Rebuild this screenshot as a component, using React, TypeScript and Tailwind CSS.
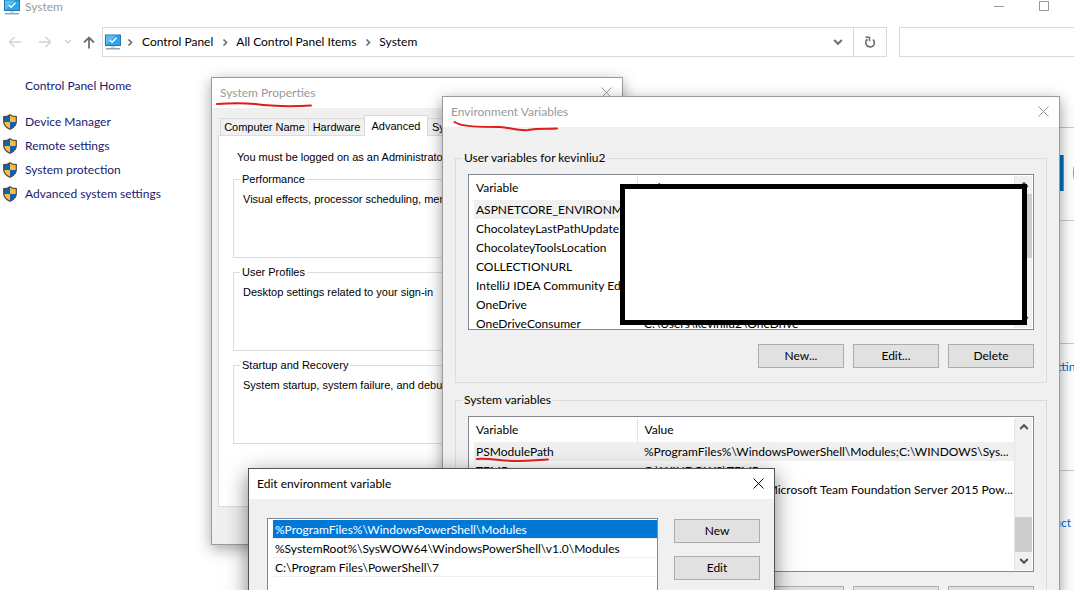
import type { ReactNode } from 'react';

const tasks = ['Device Manager', 'Remote settings', 'System protection', 'Advanced system settings'];

const crumbs = ['Control Panel', 'All Control Panel Items', 'System'];

const groups = [
  { title: 'Performance', body: 'Visual effects, processor scheduling, memory usage' },
  { title: 'User Profiles', body: 'Desktop settings related to your sign-in' },
  { title: 'Startup and Recovery', body: 'System startup, system failure, and debugging' },
];

const userVariables = [
  ['ASPNETCORE_ENVIRONMENT', ''],
  ['ChocolateyLastPathUpdate', ''],
  ['ChocolateyToolsLocation', ''],
  ['COLLECTIONURL', ''],
  ['IntelliJ IDEA Community Edition', ''],
  ['OneDrive', ''],
  ['OneDriveConsumer', 'C:\\Users\\kevinliu2\\OneDrive'],
];

const systemVariables = [
  ['PSModulePath', '%ProgramFiles%\\WindowsPowerShell\\Modules;C:\\WINDOWS\\Sys...'],
  ['TEMP', 'C:\\WINDOWS\\TEMP'],
  ['TFSPowerToolDir', 'C:\\Program Files (x86)\\Microsoft Team Foundation Server 2015 Pow...'],
];

const modulePaths = [
  '%ProgramFiles%\\WindowsPowerShell\\Modules',
  '%SystemRoot%\\SysWOW64\\WindowsPowerShell\\v1.0\\Modules',
  'C:\\Program Files\\PowerShell\\7',
];

function Monitor() {
  return (
    <svg width="16" height="16" viewBox="0 0 16 16" className="shrink-0" aria-hidden="true">
      <rect x="0.5" y="1" width="15" height="10.5" fill="#2fa4ea" stroke="#2277ad" />
      <path d="M1 11V1.500H11Z" fill="#56bdf5" />
      <path d="M4.800 6l2.300 2.300L11.500 3.800" fill="none" stroke="#fff" strokeWidth="1.400" />
      <path d="M6 12.500h4v1H6z" fill="#9db4c4" />
      <path d="M1 14h14v1.500H1z" fill="#8fa5b8" />
    </svg>
  );
}

function Shield() {
  return (
    <svg width="14" height="16" viewBox="0 0 14 16" className="shrink-0" aria-hidden="true">
      <path d="M7 0.600C5 2.200 3 2.700 0.700 2.700V7.500C0.700 11 3.500 13.800 7 15.400Z" fill="#0c62b8" />
      <path d="M7 0.600C9 2.200 11 2.700 13.300 2.700V7.500C13.300 11 10.500 13.800 7 15.400Z" fill="#fbbc3c" />
      <path d="M7 8H13.300C13 11.500 10 14 7 15.400Z" fill="#0c62b8" />
      <path d="M7 8H0.700C1 11.500 4 14 7 15.400Z" fill="#fbbc3c" />
      <path
        d="M7 0.700C5 2.200 3 2.700 0.700 2.700V7.500C0.700 11 3.500 13.800 7 15.300C10.500 13.800 13.300 11 13.300 7.500V2.700C11 2.700 9 2.200 7 0.700Z"
        fill="none"
        stroke="#4b4a45"
        strokeWidth="1.200"
      />
    </svg>
  );
}

function Cross() {
  return (
    <svg width="11" height="11" viewBox="0 0 11 11" aria-hidden="true">
      <path d="M0.500 0.500l10 10M10.500 0.500l-10 10" stroke="currentColor" fill="none" />
    </svg>
  );
}

function Chevron({ className }: { className?: string }) {
  return (
    <svg width="10" height="10" viewBox="0 0 10 10" className={className} aria-hidden="true">
      <path d="M1.200 3L5 6.800 8.800 3" stroke="currentColor" strokeWidth="2" fill="none" />
    </svg>
  );
}

function TitleBar({ title, active }: { title: string; active?: boolean }) {
  return (
    <header
      className={`flex h-[30px] items-center justify-between bg-white pr-2.5 pl-2 ${active ? 'text-black' : 'text-[#999]'}`}
    >
      <h2>{title}</h2>
      <button aria-label={`Close ${title}`} className="flex pb-0.5">
        <Cross />
      </button>
    </header>
  );
}

function PushButton({ children }: { children: ReactNode }) {
  return (
    <button className="h-6 w-[86px] shrink-0 border border-[#adadad] bg-[#e1e1e1] leading-4">{children}</button>
  );
}

function VariableList({ rows, thumb }: { rows: string[][]; thumb: string }) {
  return (
    <div className="mt-[7px] flex h-[156px] overflow-hidden border border-[#828790] bg-white p-px">
      <div className="min-w-0 flex-1 overflow-hidden border-r border-[#e5e5e5] pl-1">
        <table className="w-full table-fixed border-collapse text-left">
          <thead>
            <tr className="h-6">
              <th className="w-[163px] border-r border-[#e5e5e5] pl-0.5 font-normal">Variable</th>
              <th className="pl-[7px] font-normal">Value</th>
            </tr>
          </thead>
          <tbody>
            {rows.map(([name, value], index) => (
              <tr key={name} className={`h-[19px] ${index === 0 ? 'bg-[#f0f0f0]' : ''}`}>
                <td className="overflow-hidden pl-0.5 whitespace-nowrap">{name}</td>
                <td className="overflow-hidden pl-[7px] whitespace-nowrap">{value}</td>
              </tr>
            ))}
          </tbody>
        </table>
      </div>
      <div className="flex w-[17px] flex-col items-center bg-[#f0f0f0] text-[#505050]">
        <Chevron className="my-1 shrink-0 rotate-180" />
        <div className="relative w-full flex-1">
          <div className={`absolute w-full bg-[#cdcdcd] ${thumb}`} />
        </div>
        <Chevron className="my-1 shrink-0" />
      </div>
    </div>
  );
}

function VariableGroup({ title, rows, thumb }: { title: string; rows: string[][]; thumb: string }) {
  return (
    <fieldset className="border border-[#dcdcdc] px-3 pb-3.5">
      <legend className="-ml-1.5 px-0.5">{title}</legend>
      <VariableList rows={rows} thumb={thumb} />
      <div className="mt-3.5 flex justify-end gap-[9px]">
        <PushButton>New...</PushButton>
        <PushButton>Edit...</PushButton>
        <PushButton>Delete</PushButton>
      </div>
    </fieldset>
  );
}

function SystemProperties() {
  return (
    <section className="absolute top-[77px] left-[211px] flex h-[468px] w-[412px] flex-col border border-[#9b9b9b] bg-[#f0f0f0] shadow-[0_4px_14px_rgba(0,0,0,0.35)]">
      <TitleBar title="System Properties" />
      <div className="px-1.5 pt-[7px] font-['Liberation_Sans',Arial,sans-serif] text-[11px] leading-4">
        <div role="tablist" className="flex h-5 items-end pl-0.5">
          <button role="tab" className="h-[17px] w-[88px] border-t border-l border-[#d9d9d9]">
            Computer Name
          </button>
          <button role="tab" className="h-[17px] w-14 border-t border-l border-[#d9d9d9]">
            Hardware
          </button>
          <button
            role="tab"
            aria-selected="true"
            className="z-10 -mb-px h-[21px] w-16 border border-b-0 border-[#d9d9d9] bg-white"
          >
            Advanced
          </button>
          <button role="tab" className="h-[17px] border-t border-r border-[#d9d9d9] px-1">
            System Protection
          </button>
        </div>
        <div className="flex h-[372px] flex-col gap-1.5 border border-[#dcdcdc] bg-white px-3.5 pt-[13px]">
          <p className="pl-1 whitespace-nowrap">You must be logged on as an Administrator to make most of these changes.</p>
          {groups.map((group) => (
            <fieldset key={group.title} className="h-[87px] border border-[#dcdcdc] px-[9px]">
              <legend className="-ml-[3px] px-0.5">{group.title}</legend>
              <p className="mt-1 whitespace-nowrap">{group.body}</p>
            </fieldset>
          ))}
        </div>
      </div>
    </section>
  );
}

function EnvironmentVariables() {
  return (
    <section className="absolute top-[96px] left-[442px] w-[618px] border border-[#9b9b9b] bg-[#f0f0f0] shadow-[0_4px_14px_rgba(0,0,0,0.4)]">
      <TitleBar title="Environment Variables" />
      <div className="flex flex-col gap-2 px-3 pt-[22px] pb-12">
        <VariableGroup title="User variables for kevinliu2" rows={userVariables} thumb="top-0 h-16" />
        <VariableGroup title="System variables" rows={systemVariables} thumb="bottom-0 h-[35px]" />
      </div>
    </section>
  );
}

function EditVariable() {
  return (
    <section className="absolute top-[468px] left-[248px] w-[527px] border border-[#555] bg-[#f0f0f0] shadow-[0_6px_20px_rgba(0,0,0,0.5)]">
      <TitleBar title="Edit environment variable" active />
      <div className="flex gap-4 pt-[19px] pr-3.5 pl-[18px]">
        <ul className="h-80 w-[391px] shrink-0 border border-[#828790] bg-white pt-px pl-[5px] leading-5">
          {modulePaths.map((path, index) => (
            <li
              key={path}
              className={`h-[19px] border-b border-[#f0f0f0] pl-0.5 ${index === 0 ? 'bg-[#0078d7] text-white' : ''}`}
            >
              {path}
            </li>
          ))}
        </ul>
        <div className="flex flex-col gap-[13px] pt-px">
          <PushButton>New</PushButton>
          <PushButton>Edit</PushButton>
        </div>
      </div>
    </section>
  );
}

function AddressBar() {
  return (
    <div className="mt-3.5 flex h-[30px] text-black">
      <nav className="flex w-[102px] shrink-0 items-center text-[#d2d2d2]">
        <button aria-label="Back" className="ml-2">
          <svg width="14" height="12" viewBox="0 0 14 12">
            <path d="M13 6H1.500M6.500 1l-5 5 5 5" stroke="currentColor" strokeWidth="1.400" fill="none" />
          </svg>
        </button>
        <button aria-label="Forward" className="ml-4">
          <svg width="14" height="12" viewBox="0 0 14 12">
            <path d="M1 6h11.500M7.500 1l5 5-5 5" stroke="currentColor" strokeWidth="1.400" fill="none" />
          </svg>
        </button>
        <button aria-label="Recent locations" className="ml-3">
          <svg width="8" height="6" viewBox="0 0 8 6">
            <path d="M1 1l3 3 3-3" stroke="currentColor" strokeWidth="1.500" fill="none" />
          </svg>
        </button>
        <button aria-label="Up" className="ml-[11px] text-[#707070]">
          <svg width="12" height="13" viewBox="0 0 12 13">
            <path d="M6 12.500V1.500M1 6.500l5-5 5 5" stroke="currentColor" strokeWidth="1.800" fill="none" />
          </svg>
        </button>
      </nav>
      <div className="flex min-w-0 flex-1 items-center border border-[#d9d9d9] pl-0.5">
        <Monitor />
        {crumbs.map((crumb, index) => (
          <div key={crumb} className="flex items-center">
            <svg
              width="9"
              height="9"
              viewBox="0 0 9 9"
              className={`text-[#6a6a6a] ${index === 0 ? 'mr-2 ml-1' : 'mx-[7px]'}`}
              aria-hidden="true"
            >
              <path d="M3.500 1.500l3 3-3 3" stroke="currentColor" strokeWidth="1.600" fill="none" />
            </svg>
            <a href="#" className="whitespace-nowrap">
              {crumb}
            </a>
          </div>
        ))}
        <button aria-label="Previous locations" className="mr-2.5 ml-auto text-[#707070]">
          <Chevron />
        </button>
        <button
          aria-label="Refresh"
          className="flex h-full w-[33px] items-center justify-center border-l border-[#d9d9d9] text-[#707070]"
        >
          <svg width="12" height="12" viewBox="0 0 12 12">
            <path d="M9 3.500A4.300 4.300 0 1 1 3.500 3.200" stroke="currentColor" strokeWidth="1.700" fill="none" />
            <path d="M1.500 1.200H5.500V5.200" stroke="currentColor" strokeWidth="1.500" fill="none" />
          </svg>
        </button>
      </div>
      <input
        aria-label="Search Control Panel"
        className="ml-3 w-[175px] shrink-0 border border-r-0 border-[#d9d9d9] px-2 outline-none"
      />
    </div>
  );
}

function SystemWindow() {
  return (
    <section className="flex h-full flex-col">
      <header className="flex h-[13px] items-center gap-[5px] pl-1 text-[#999]">
        <Monitor />
        <h1>System</h1>
        <button aria-label="Minimize" className="mr-[29px] ml-auto flex">
          <svg width="11" height="11" viewBox="0 0 11 11">
            <path d="M0 5.500h10" stroke="currentColor" />
          </svg>
        </button>
        <button aria-label="Maximize" className="mr-6 flex">
          <svg width="11" height="11" viewBox="0 0 11 11">
            <path d="M0.500 0.500h9v9h-9z" stroke="currentColor" fill="none" />
          </svg>
        </button>
      </header>
      <AddressBar />
      <div className="flex flex-1">
        <aside className="w-[211px] shrink-0 pt-5 text-[#191970]">
          <a href="#" className="ml-[25px]">
            Control Panel Home
          </a>
          <ul className="mt-[15px]">
            {tasks.map((task) => (
              <li key={task} className="flex h-6 items-center gap-2 pl-[3px]">
                <Shield />
                <a href="#">{task}</a>
              </li>
            ))}
          </ul>
        </aside>
        <div className="flex-1 overflow-hidden pt-[70px] text-[#0066cc]">
          <div className="h-[93px] border-t border-[#c8c8c8] pt-4">
            <p className="ml-auto w-[31px] font-['Open_Sans',sans-serif] text-[50px] leading-[56px] font-bold whitespace-nowrap text-[#0072bc]">
              10
            </p>
          </div>
          <div className="h-[123px] border-t border-[#c8c8c8]" />
          <div className="h-[127px] border-t border-[#c8c8c8] pt-3.5">
            <a href="#" className="ml-auto block w-7 whitespace-nowrap">
              settings
            </a>
          </div>
          <div className="border-t border-[#c8c8c8] pt-[43px] pr-[3px] text-right">
            <a href="#">product</a>
          </div>
        </div>
      </div>
    </section>
  );
}

function RedMarks() {
  return (
    <svg className="pointer-events-none absolute inset-0 h-full w-full" fill="none" stroke="#e01b1b" strokeWidth="2" strokeLinecap="round">
      <path d="M217 104C230 103 245 103 255 104C270 106 285 107 311 105.500" />
      <path d="M454.500 122C462 127 480 127 500 127C512 128 518 131 528 130C538 128 546 129 557 128.500" />
      <path d="M477 459C490 458 500 461 515 461C528 461 538 460 548 459.500" />
    </svg>
  );
}

export default function App() {
  return (
    <div className="h-screen bg-white pb-[5px] font-[Lato,'Open_Sans',sans-serif] text-[12px] leading-[18px] text-black">
      <main className="relative h-full overflow-hidden bg-white">
        <SystemWindow />
        <SystemProperties />
        <EnvironmentVariables />
        <div className="absolute top-[184px] left-[620px] h-[141px] w-[407px] border-5 border-black bg-white" />
        <EditVariable />
        <RedMarks />
      </main>
    </div>
  );
}
